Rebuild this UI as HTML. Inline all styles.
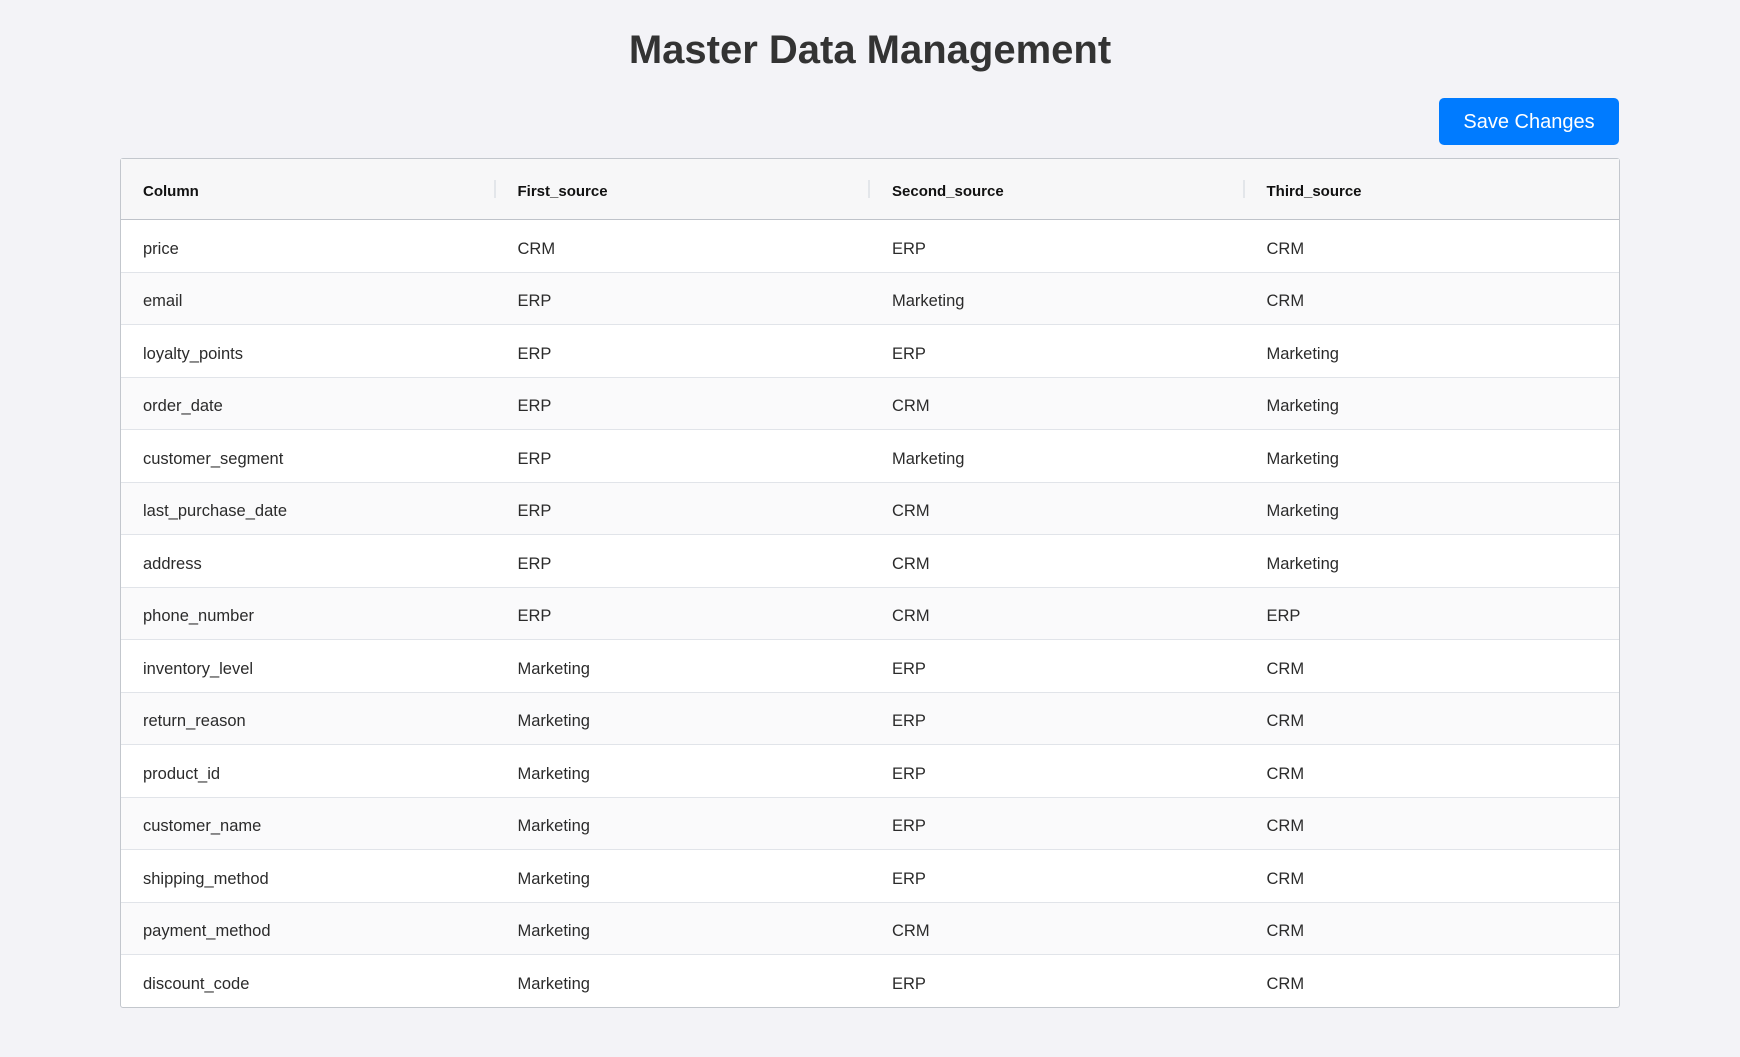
<!DOCTYPE html>
<html><head><meta charset="utf-8"><style>
html,body{margin:0;padding:0;background:#f3f3f7;width:1740px;height:1057px;overflow:hidden}
body{font-family:"Liberation Sans",sans-serif;position:relative}
h1{position:absolute;top:22px;left:0;width:1740px;margin:0;text-align:center;font-size:40px;font-weight:bold;color:#333;line-height:56px}
.btn{position:absolute;left:1439px;top:98px;width:180px;height:47px;background:#007bff;color:#fff;border-radius:5px;font-size:20px;line-height:48px;text-align:center}
table{position:absolute;left:120px;top:158px;width:1500px;border-collapse:separate;border-spacing:0;border:1px solid #c3c7cd;border-radius:3px;background:#fff;table-layout:fixed}
th{height:56px;padding:4px 0 0 22px;background:#f7f7f8;text-align:left;font-size:15px;font-weight:bold;color:#111;border-bottom:1px solid #bfc3ca;position:relative}
th+th::before{content:"";position:absolute;left:-2px;top:21px;height:18px;width:2px;background:#e3e6ea}
td{height:44.5px;padding:7px 0 0 22px;font-size:16.5px;color:#2b2b2b;border-bottom:1px solid #e1e4e9}
tr:nth-child(even) td{background:#fafafb}
tr:last-child td{border-bottom:none}
</style></head><body>
<h1>Master Data Management</h1>
<div class="btn">Save Changes</div>
<table>
<thead><tr><th>Column</th><th>First_source</th><th>Second_source</th><th>Third_source</th></tr></thead>
<tbody>
<tr><td>price</td><td>CRM</td><td>ERP</td><td>CRM</td></tr>
<tr><td>email</td><td>ERP</td><td>Marketing</td><td>CRM</td></tr>
<tr><td>loyalty_points</td><td>ERP</td><td>ERP</td><td>Marketing</td></tr>
<tr><td>order_date</td><td>ERP</td><td>CRM</td><td>Marketing</td></tr>
<tr><td>customer_segment</td><td>ERP</td><td>Marketing</td><td>Marketing</td></tr>
<tr><td>last_purchase_date</td><td>ERP</td><td>CRM</td><td>Marketing</td></tr>
<tr><td>address</td><td>ERP</td><td>CRM</td><td>Marketing</td></tr>
<tr><td>phone_number</td><td>ERP</td><td>CRM</td><td>ERP</td></tr>
<tr><td>inventory_level</td><td>Marketing</td><td>ERP</td><td>CRM</td></tr>
<tr><td>return_reason</td><td>Marketing</td><td>ERP</td><td>CRM</td></tr>
<tr><td>product_id</td><td>Marketing</td><td>ERP</td><td>CRM</td></tr>
<tr><td>customer_name</td><td>Marketing</td><td>ERP</td><td>CRM</td></tr>
<tr><td>shipping_method</td><td>Marketing</td><td>ERP</td><td>CRM</td></tr>
<tr><td>payment_method</td><td>Marketing</td><td>CRM</td><td>CRM</td></tr>
<tr><td>discount_code</td><td>Marketing</td><td>ERP</td><td>CRM</td></tr>
</tbody></table>
</body></html>
